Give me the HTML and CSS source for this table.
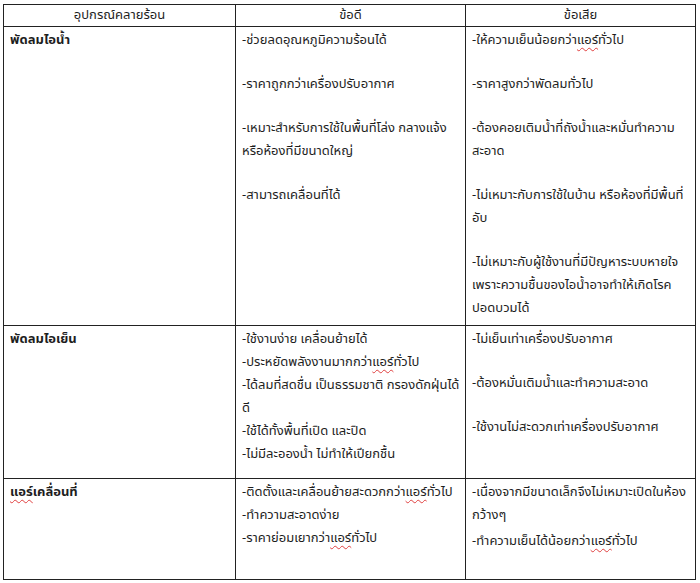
FILE: index.html
```html
<!DOCTYPE html>
<html lang="th">
<head>
<meta charset="utf-8">
<title>อุปกรณ์คลายร้อน</title>
<link rel="stylesheet" href="styles.css">
</head>
<body>
<div class="sheet">
  <div class="grid">
    <div class="cell head">อุปกรณ์คลายร้อน</div>
    <div class="cell head">ข้อดี</div>
    <div class="cell head">ข้อเสีย</div>

    <div class="cell r1 name">พัดลมไอน้ำ</div>
    <div class="cell r1 spaced">
      <p>-ช่วยลดอุณหภูมิความร้อนได้</p>
      <p>-ราคาถูกกว่าเครื่องปรับอากาศ</p>
      <p>-เหมาะสำหรับการใช้ในพื้นที่โล่ง กลางแจ้ง<br>หรือห้องที่มีขนาดใหญ่</p>
      <p>-สามารถเคลื่อนที่ได้</p>
    </div>
    <div class="cell r1 spaced">
      <p>-ให้ความเย็นน้อยกว่า<span class="sp">แอร์</span>ทั่วไป</p>
      <p>-ราคาสูงกว่าพัดลมทั่วไป</p>
      <p>-ต้องคอยเติมน้ำที่ถังน้ำและหมั่นทำความ<br>สะอาด</p>
      <p>-ไม่เหมาะกับการใช้ในบ้าน หรือห้องที่มีพื้นที่<br>อับ</p>
      <p>-ไม่เหมาะกับผู้ใช้งานที่มีปัญหาระบบหายใจ<br>เพราะความชื้นของไอน้ำอาจทำให้เกิดโรค<br>ปอดบวมได้</p>
    </div>

    <div class="cell r2 name">พัดลมไอเย็น</div>
    <div class="cell r2">
      <p>-ใช้งานง่าย เคลื่อนย้ายได้</p>
      <p>-ประหยัดพลังงานมากกว่า<span class="sp">แอร์</span>ทั่วไป</p>
      <p>-ได้ลมที่สดชื่น เป็นธรรมชาติ กรองดักฝุ่นได้<br>ดี</p>
      <p>-ใช้ได้ทั้งพื้นที่เปิด และปิด</p>
      <p>-ไม่มีละอองน้ำ ไม่ทำให้เปียกชื้น</p>
    </div>
    <div class="cell r2 spaced">
      <p>-ไม่เย็นเท่าเครื่องปรับอากาศ</p>
      <p>-ต้องหมั่นเติมน้ำและทำความสะอาด</p>
      <p>-ใช้งานไม่สะดวกเท่าเครื่องปรับอากาศ</p>
    </div>

    <div class="cell r3 name"><span class="sp">แอร์</span>เคลื่อนที่</div>
    <div class="cell r3">
      <p>-ติดตั้งและเคลื่อนย้ายสะดวกกว่า<span class="sp">แอร์</span>ทั่วไป</p>
      <p>-ทำความสะอาดง่าย</p>
      <p>-ราคาย่อมเยากว่า<span class="sp">แอร์</span>ทั่วไป</p>
    </div>
    <div class="cell r3 small-gap">
      <p>-เนื่องจากมีขนาดเล็กจึงไม่เหมาะเปิดในห้อง<br>กว้างๆ</p>
      <p>-ทำความเย็นได้น้อยกว่า<span class="sp">แอร์</span>ทั่วไป</p>
    </div>
  </div>
</div>
</body>
</html>
```

FILE: styles.css
```css
html, body {
  margin: 0;
  padding: 0;
  background: #ffffff;
}

body {
  font-family: Tahoma, "Noto Sans Thai", "Noto Sans", "DejaVu Sans", sans-serif;
  font-size: 13px;
  color: #1e1e1e;
}

.sheet {
  padding: 4px 0 0 3px;
}

.grid {
  display: grid;
  grid-template-columns: 232px 230px 230px;
  grid-template-rows: 22px 299px 153px 101px;
  width: 693px;
  border-top: 1px solid #222;
  border-left: 1px solid #222;
  box-sizing: border-box;
}

.cell {
  box-sizing: border-box;
  border-right: 1px solid #222;
  border-bottom: 1px solid #222;
  padding: 2px 6px 0 6px;
  line-height: 23px;
  white-space: nowrap;
  overflow: hidden;
}

.cell p {
  margin: 0;
}

.head {
  text-align: center;
  padding-top: 0;
  line-height: 21px;
}

.name {
  font-weight: bold;
}

.spaced p + p {
  margin-top: 21px;
}

.small-gap p + p {
  margin-top: 3px;
}

.sp {
  text-decoration-line: underline;
  text-decoration-style: wavy;
  text-decoration-color: #e04040;
  text-decoration-thickness: 1px;
  text-underline-offset: 3px;
}
```
